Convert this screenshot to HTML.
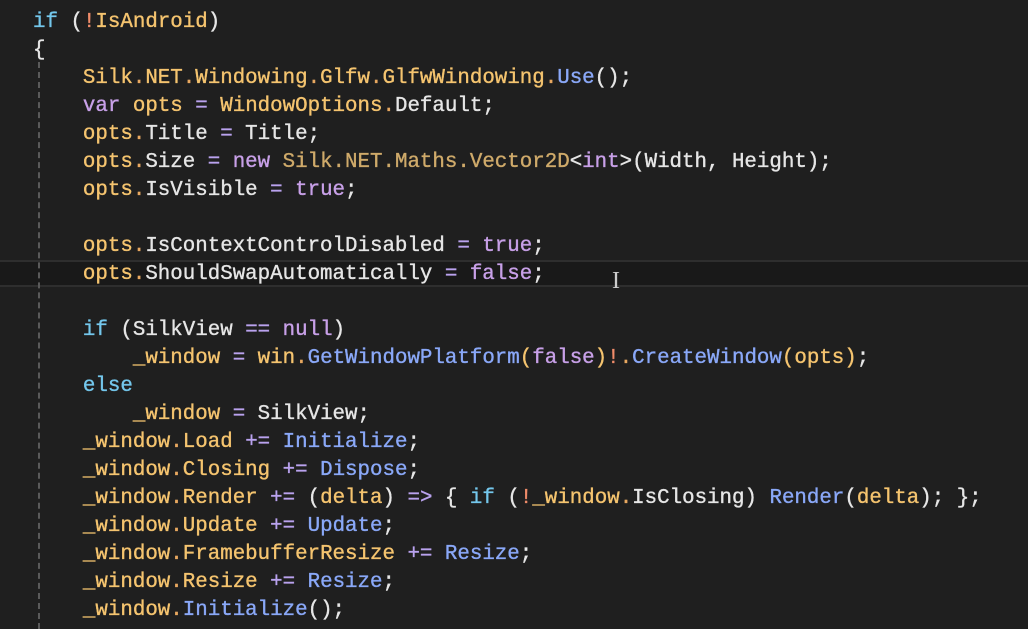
<!DOCTYPE html>
<html><head><meta charset="utf-8"><style>
html,body{margin:0;padding:0;background:#1f1f1f;width:1028px;height:629px;overflow:hidden}
#c{position:absolute;left:33px;top:9px;font-family:"Liberation Mono",monospace;font-size:20.8px;color:#e6e6e6;-webkit-text-stroke:0.35px currentColor}
.l{height:28px;line-height:28px;white-space:pre}
.cur{position:absolute;left:0;top:260px;width:1028px;height:27px;box-sizing:border-box;border-top:2px solid #2e2e2e;border-bottom:2px solid #2e2e2e;background:#191919}
.g{position:absolute;left:38px;top:62px;height:567px;border-left:2px dashed #5a5a5a}
.k{color:#74c7ec}.p{color:#c8a0e8}.o{color:#f5c46f}.d{color:#e8a860}.m{color:#8aa8f8}.t{color:#cfaa6a}.x{color:#f08c6a}.op{color:#b9a2ee}
</style></head><body>
<div class="cur"></div>
<div class="g"></div>
<div style="position:absolute;left:612px;top:266px;width:12px;height:30px;color:#ccc;font:24px 'Liberation Serif',serif;line-height:30px">I</div>
<div id="c"><div class="l"><span class="k">if</span> (<span class="x">!</span><span class="o">IsAndroid</span>)</div><div class="l">{</div><div class="l">    <span class="o">Silk</span><span class="d">.</span><span class="o">NET</span><span class="d">.</span><span class="o">Windowing</span><span class="d">.</span><span class="o">Glfw</span><span class="d">.</span><span class="o">GlfwWindowing</span><span class="d">.</span><span class="m">Use</span>();</div><div class="l">    <span class="p">var</span> <span class="o">opts</span> <span class="op">=</span> <span class="o">WindowOptions</span><span class="d">.</span>Default;</div><div class="l">    <span class="o">opts</span><span class="d">.</span>Title <span class="op">=</span> Title;</div><div class="l">    <span class="o">opts</span><span class="d">.</span>Size <span class="op">=</span> <span class="p">new</span> <span class="t">Silk.NET.Maths.Vector2D</span>&lt;<span class="p">int</span>&gt;(Width, Height);</div><div class="l">    <span class="o">opts</span><span class="d">.</span>IsVisible <span class="op">=</span> <span class="p">true</span>;</div><div class="l"> </div><div class="l">    <span class="o">opts</span><span class="d">.</span>IsContextControlDisabled <span class="op">=</span> <span class="p">true</span>;</div><div class="l">    <span class="o">opts</span><span class="d">.</span>ShouldSwapAutomatically <span class="op">=</span> <span class="p">false</span>;</div><div class="l"> </div><div class="l">    <span class="k">if</span> (SilkView <span class="op">==</span> <span class="p">null</span>)</div><div class="l">        <span class="o">_window</span> <span class="op">=</span> <span class="o">win</span><span class="d">.</span><span class="m">GetWindowPlatform</span><span class="o">(</span><span class="p">false</span><span class="o">)</span><span class="x">!</span><span class="d">.</span><span class="m">CreateWindow</span><span class="o">(opts)</span>;</div><div class="l">    <span class="k">else</span></div><div class="l">        <span class="o">_window</span> <span class="op">=</span> SilkView;</div><div class="l">    <span class="o">_window</span><span class="d">.</span><span class="o">Load</span> <span class="op">+=</span> <span class="m">Initialize</span>;</div><div class="l">    <span class="o">_window</span><span class="d">.</span><span class="o">Closing</span> <span class="op">+=</span> <span class="m">Dispose</span>;</div><div class="l">    <span class="o">_window</span><span class="d">.</span><span class="o">Render</span> <span class="op">+=</span> (<span class="o">delta</span>) <span class="op">=&gt;</span> { <span class="k">if</span> (<span class="x">!</span><span class="o">_window</span><span class="d">.</span>IsClosing) <span class="m">Render</span>(<span class="o">delta</span>); };</div><div class="l">    <span class="o">_window</span><span class="d">.</span><span class="o">Update</span> <span class="op">+=</span> <span class="m">Update</span>;</div><div class="l">    <span class="o">_window</span><span class="d">.</span><span class="o">FramebufferResize</span> <span class="op">+=</span> <span class="m">Resize</span>;</div><div class="l">    <span class="o">_window</span><span class="d">.</span><span class="o">Resize</span> <span class="op">+=</span> <span class="m">Resize</span>;</div><div class="l">    <span class="o">_window</span><span class="d">.</span><span class="m">Initialize</span>();</div></div>
</body></html>
